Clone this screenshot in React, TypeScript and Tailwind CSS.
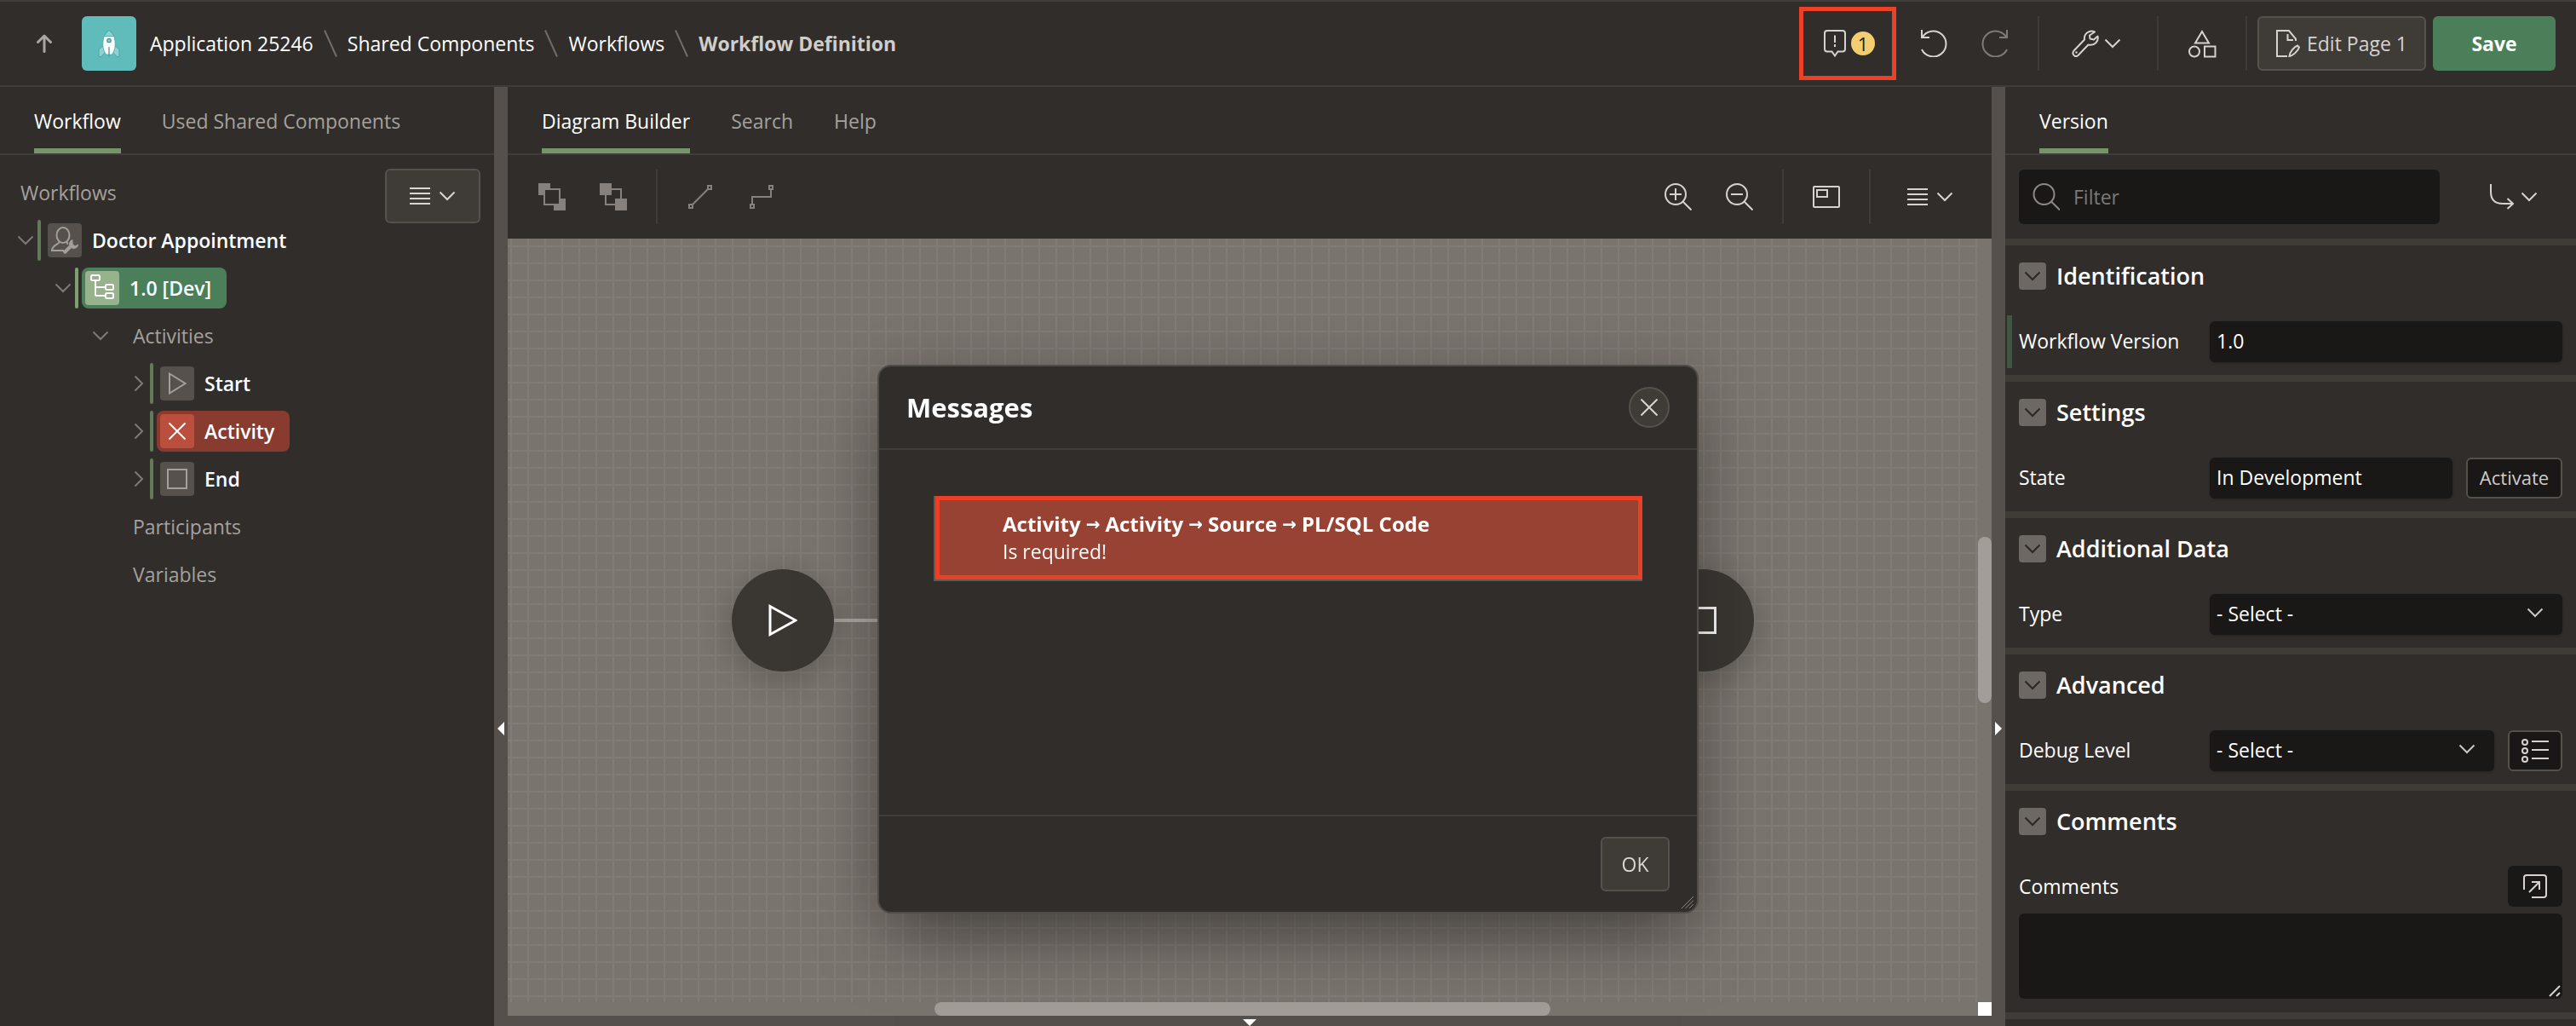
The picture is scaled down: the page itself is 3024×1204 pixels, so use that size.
import React, { useId } from 'react';

type IconProps = { w: number; h: number; className?: string; sw?: number; children: React.ReactNode };

function Icon({ w, h, className = '', sw = 2, children }: IconProps) {
  return (
    <svg
      width={w}
      height={h}
      viewBox={`0 0 ${w} ${h}`}
      fill="none"
      stroke="currentColor"
      strokeWidth={sw}
      className={`shrink-0 ${className}`}
      aria-hidden="true"
    >
      {children}
    </svg>
  );
}

const ChevronDown = ({ className = '' }: { className?: string }) => (
  <Icon w={20} h={12} className={className}>
    <path d="M1.5 1.5 L10 10 L18.5 1.5" />
  </Icon>
);

const ChevronRight = ({ className = '' }: { className?: string }) => (
  <Icon w={12} h={20} className={className}>
    <path d="M1.5 1.5 L10 10 L1.5 18.5" />
  </Icon>
);

const MenuLines = () => (
  <Icon w={24} h={20}>
    <path d="M0 1H24M0 7H24M0 13H24M0 19H24" />
  </Icon>
);

const Slash = () => (
  <Icon w={16} h={32} className="mx-3 text-[#716c67]">
    <path d="M1 0.5 L15 31.5" />
  </Icon>
);

const Rocket = () => (
  <svg width="26" height="34" viewBox="0 0 26 34" aria-hidden="true">
    <path d="M6.5 19 L1 24 V32.5 L3.5 32.5 L8.5 28 Z" fill="#8fd1cf" stroke="#4aa5a4" />
    <path d="M19.5 19 L25 24 V32.5 L22.5 32.5 L17.5 28 Z" fill="#8fd1cf" stroke="#4aa5a4" />
    <path d="M13 1.500 C10 4 8 6 7.500 8.500 H18.500 C18 6 16 4 13 1.500 Z" fill="#8fd1cf" stroke="#4aa5a4" />
    <path d="M7.300 8.500 C5 15 5 24 9.500 30 H16.500 C21 24 21 15 18.700 8.500 Z" fill="#ffffff" stroke="#4aa5a4" strokeWidth="0.8" />
    <circle cx="13" cy="13.5" r="2.2" fill="#8fd1cf" stroke="#3e9a99" strokeWidth="1.3" />
    <path d="M13 21V33" stroke="#4aa5a4" strokeWidth="1.4" />
  </svg>
);

const Triangle = ({ dir }: { dir: 'left' | 'right' | 'down' }) =>
  dir === 'down' ? (
    <svg width="16" height="8" viewBox="0 0 16 8" aria-hidden="true">
      <path d="M0 0H16L8 8Z" fill="#fff" />
    </svg>
  ) : (
    <svg width="8" height="16" viewBox="0 0 8 16" aria-hidden="true">
      <path d={dir === 'left' ? 'M8 0V16L0 8Z' : 'M0 0V16L8 8Z'} fill="#fff" />
    </svg>
  );

const VDivider = () => <div className="h-16 w-0.5 shrink-0 bg-[#3f3b38]" />;

function Header() {
  const link = 'text-white';
  return (
    <header className="flex h-[102px] shrink-0 items-center border-y-2 border-[#403c39] pr-6 pl-10">
      <button aria-label="Up" className="flex h-16 w-6 items-center justify-center text-[#aaa6a3]">
        <Icon w={20} h={22} sw={3}>
          <path d="M10 20.500V2.500M2.500 9.500L10 2L17.500 9.500" strokeLinecap="round" strokeLinejoin="round" />
        </Icon>
      </button>
      <a
        href="#app"
        aria-label="Application home"
        className="ml-8 flex h-16 w-16 items-center justify-center rounded-md bg-[#60bbbb]"
      >
        <Rocket />
      </a>
      <nav aria-label="Breadcrumb" className="ml-4 flex items-center whitespace-nowrap">
        <a href="#application" className={link}>Application 25246</a>
        <Slash />
        <a href="#shared" className={link}>Shared Components</a>
        <Slash />
        <a href="#workflows" className={link}>Workflows</a>
        <Slash />
        <span className="font-bold text-[#d0cdca]">Workflow Definition</span>
      </nav>
      <div className="ml-auto flex items-center text-[#d5d2cf]">
        <button
          aria-label="Messages, 1"
          className="flex h-[86px] w-[114px] items-center justify-center gap-1.5 border-5 border-[#ec4127] pl-1"
        >
          <Icon w={26} h={32}>
            <path d="M4 1H22Q25 1 25 4V22.500Q25 25.500 22 25.500H16.500L13 30.500L9.500 25.500H4Q1 25.500 1 22.500V4Q1 1 4 1Z" />
            <path d="M13 6.500V15M13 17V20" />
          </Icon>
          <span className="flex h-7 w-7 items-center justify-center rounded-full bg-[#f3cd70] text-[22px] leading-7 text-[#201d1a]">
            1
          </span>
        </button>
        <button aria-label="Undo" className="ml-7 flex h-16 w-8 items-center justify-center">
          <Icon w={32} h={32}>
            <path d="M2 0V9H11" />
            <path d="M2.500 9A15 15 0 1 1 2 23" />
          </Icon>
        </button>
        <button aria-label="Redo" className="ml-10 flex h-16 w-8 items-center justify-center text-[#7f7a76]">
          <Icon w={32} h={32}>
            <path d="M30 0V9H21" />
            <path d="M29.500 9A15 15 0 1 0 30 23" />
          </Icon>
        </button>
        <div className="ml-[34px]"><VDivider /></div>
        <button aria-label="Utilities" className="flex h-16 w-[138px] items-center justify-center gap-1.5 pr-1">
          <Icon w={32} h={32}>
            <path
              d="M27 2.500C21 -0.500 14 4.500 15 11.500L2.500 24.500C-0.500 28.500 4 33 7.500 30L19.500 17.500C27 19 32 13.500 30.500 7.500L26 11.500L21.500 10.500L21 6.500Z"
              strokeLinejoin="round"
            />
            <circle cx="5.5" cy="26.5" r="1.2" fill="currentColor" stroke="none" />
          </Icon>
          <ChevronDown />
        </button>
        <VDivider />
        <button aria-label="Shared components" className="flex h-16 w-[102px] items-center justify-center">
          <Icon w={34} h={34}>
            <path d="M17 3L25 16.500H9Z" />
            <circle cx="8" cy="26.5" r="6" />
            <path d="M20 20.500H32.500V32.500H20Z" />
          </Icon>
        </button>
        <VDivider />
        <button className="ml-3 flex h-16 w-[198px] items-center justify-center gap-2 rounded-md border-2 border-[#56524e] bg-[#3f3b37] whitespace-nowrap">
          <Icon w={28} h={32}>
            <path d="M13 31H1V1H15L23 10.500V13" />
            <path d="M13.500 5V12H20" />
            <path d="M25 18.500L27 20.500C26 24 20 30.500 15.500 31C16 26 21 20 25 18.500Z" />
          </Icon>
          Edit Page 1
        </button>
        <button className="ml-2 h-16 w-36 rounded-md bg-[#4b7f5a] font-bold text-white">Save</button>
      </div>
    </header>
  );
}

function Tabs({ items }: { items: string[] }) {
  return (
    <div role="tablist" className="flex h-20 shrink-0 gap-12 border-b-2 border-[#403c39] px-10 whitespace-nowrap">
      {items.map((t, i) => (
        <button
          key={t}
          role="tab"
          aria-selected={i === 0}
          className={
            i === 0
              ? 'border-b-6 border-[#759468] pt-2 text-white'
              : 'border-b-6 border-transparent pt-2 text-[#a5a19d]'
          }
        >
          {t}
        </button>
      ))}
    </div>
  );
}

const TreeIcon = ({ className = 'bg-[#56514d] text-[#a39f9b]', children }: { className?: string; children: React.ReactNode }) => (
  <span className={`flex h-10 w-10 shrink-0 items-center justify-center rounded ${className}`}>{children}</span>
);

function WorkflowTree() {
  const bar = 'h-12 w-1 shrink-0 rounded-sm bg-[#627a58]';
  const node = 'flex h-12 items-center gap-3 rounded-lg pl-1 pr-[18px] font-semibold text-white';
  return (
    <aside className="flex w-[580px] shrink-0 flex-col">
      <Tabs items={['Workflow', 'Used Shared Components']} />
      <div className="relative pt-4 whitespace-nowrap text-[#a5a19d]">
        <button
          aria-label="Tree menu"
          className="absolute top-4 right-4 flex h-16 w-28 items-center justify-center gap-2.5 rounded-md border-2 border-[#55514d] bg-[#3f3b37] text-[#d8d5d2]"
        >
          <MenuLines />
          <ChevronDown />
        </button>
        <div className="flex h-14 items-center pl-6">Workflows</div>
        <ul role="tree" aria-label="Workflows">
          <li role="treeitem" className="flex h-14 items-center pl-5">
            <ChevronDown className="text-[#7f7a76]" />
            <span className={`ml-1 ${bar}`} />
            <span className={`ml-1 ${node}`}>
              <TreeIcon>
                <Icon w={32} h={32}>
                  <ellipse cx="14" cy="10" rx="7.5" ry="9" />
                  <path d="M9.500 17.500C10 21 1 21 1 28H15M18.500 17.500C18.500 19 19 20 20 20.500" />
                  <path d="M15 31L23 23" strokeWidth="4" />
                  <path d="M25.500 15A5.500 5.500 0 1 0 32 20.500L28 22.500L25.500 20Z" fill="currentColor" stroke="none" />
                </Icon>
              </TreeIcon>
              Doctor Appointment
            </span>
          </li>
          <li role="treeitem" className="flex h-14 items-center pl-16">
            <ChevronDown className="text-[#7f7a76]" />
            <span className="ml-1 h-12 w-1 shrink-0 rounded-sm bg-[#7f9f71]" />
            <span className={`ml-1 bg-[#4b7f5a] ${node}`}>
              <TreeIcon className="bg-[#98b28d] text-white">
                <Icon w={28} h={32}>
                  <rect x="1" y="1" width="10" height="6" rx="1.5" />
                  <rect x="18" y="12" width="9" height="6" rx="1.5" />
                  <rect x="18" y="22" width="9" height="6" rx="1.5" />
                  <path d="M6 7V23.500Q6 25 7.500 25H18M6 15H18" />
                </Icon>
              </TreeIcon>
              1.0 [Dev]
            </span>
          </li>
          <li role="treeitem" className="flex h-14 items-center gap-7 pl-[108px]">
            <ChevronDown className="text-[#7f7a76]" />
            Activities
          </li>
          {[
            {
              label: 'Start',
              pill: '',
              box: 'bg-[#56514d] text-[#a39f9b]',
              d: 'M11 8.500L29.500 20L11 31.500Z',
            },
            {
              label: 'Activity',
              pill: 'bg-[#883b2e]',
              box: 'bg-[#b94f3c] text-white',
              d: 'M10.500 10.500L29.500 29.500M29.500 10.500L10.500 29.500',
            },
            {
              label: 'End',
              pill: '',
              box: 'bg-[#56514d] text-[#a39f9b]',
              d: 'M9 9H31V31H9Z',
            },
          ].map((n) => (
            <li key={n.label} role="treeitem" className="flex h-14 items-center pl-[157px]">
              <ChevronRight className="text-[#7f7a76]" />
              <span className={`ml-[7px] ${bar}`} />
              <span className={`ml-1 ${node} ${n.pill}`}>
                <TreeIcon className={n.box}>
                  <Icon w={40} h={40}>
                    <path d={n.d} />
                  </Icon>
                </TreeIcon>
                {n.label}
              </span>
            </li>
          ))}
          <li role="treeitem" className="flex h-14 items-center pl-[156px]">Participants</li>
          <li role="treeitem" className="flex h-14 items-center pl-[156px]">Variables</li>
        </ul>
      </div>
    </aside>
  );
}

function Splitter({ dir }: { dir: 'left' | 'right' }) {
  return (
    <div className="flex w-4 shrink-0 justify-center bg-[#55504b] pt-[745px]">
      <Triangle dir={dir} />
    </div>
  );
}

function Toolbar() {
  const btn = 'flex h-16 w-[72px] items-center justify-center';
  return (
    <div className="flex h-[98px] shrink-0 items-center px-4 text-[#d5d2cf]">
      <div className="flex items-center text-[#86817d]">
        <button aria-label="Bring to front" className={btn}>
          <Icon w={32} h={32}>
            <path d="M0 0H14V6H6V14H0Z" fill="currentColor" stroke="none" />
            <path d="M32 32H18V26H26V18H32Z" fill="currentColor" stroke="none" />
            <path d="M7 7H25V25H7Z" />
          </Icon>
        </button>
        <button aria-label="Send to back" className={btn}>
          <Icon w={32} h={32}>
            <path d="M0 0H14V14H0ZM18 18H32V32H18Z" fill="currentColor" stroke="none" />
            <path d="M14 7H25V18M7 14V25H18" />
          </Icon>
        </button>
        <div className="ml-3.5"><VDivider /></div>
        <button aria-label="Straight connector" className={`ml-3.5 ${btn}`}>
          <Icon w={28} h={28}>
            <path d="M1 23H5V27H1ZM23 1H27V5H23ZM4.500 23.500L23.500 4.500" />
          </Icon>
        </button>
        <button aria-label="Elbow connector" className={btn}>
          <Icon w={28} h={28}>
            <path d="M1 23H5V27H1ZM23 1H27V5H23ZM3 23V14H25V5" />
          </Icon>
        </button>
      </div>
      <div className="ml-auto flex items-center">
        <button aria-label="Zoom in" className={btn}>
          <Icon w={32} h={32}>
            <circle cx="13" cy="13" r="12" />
            <path d="M21.500 21.500L31.500 31.500M6 13H20M13 6V20" />
          </Icon>
        </button>
        <button aria-label="Zoom out" className={btn}>
          <Icon w={32} h={32}>
            <circle cx="13" cy="13" r="12" />
            <path d="M21.500 21.500L31.500 31.500M6 13H20" />
          </Icon>
        </button>
        <div className="ml-3.5"><VDivider /></div>
        <button aria-label="Overview" className="flex h-16 w-[100px] items-center justify-center">
          <Icon w={32} h={26}>
            <rect x="1" y="1" width="30" height="24" rx="1" />
            <path d="M5 5H17V13H5Z" />
          </Icon>
        </button>
        <VDivider />
        <button aria-label="Diagram menu" className="ml-3.5 flex h-16 w-28 items-center justify-center gap-2.5">
          <MenuLines />
          <ChevronDown />
        </button>
      </div>
    </div>
  );
}

function Diagram() {
  const circle =
    'absolute flex h-[120px] w-[120px] items-center justify-center rounded-full bg-[#3a3733] shadow-[0_8px_28px_6px_rgba(58,55,51,0.3)]';
  return (
    <div className="relative flex-1 overflow-hidden bg-[#7a746f]">
      <div className="absolute top-0 right-4 bottom-4 left-0 bg-[linear-gradient(to_right,#817c77_2px,transparent_2px),linear-gradient(to_bottom,#817c77_2px,transparent_2px)] bg-[size:20px_20px] bg-[position:3px_8px]" />
      <div className="absolute top-[446px] left-[383px] h-1 w-[960px] bg-[#afaaa6]" />
      <div className={`${circle} top-[388px] left-[263px] text-white`}>
        <Icon w={34} h={38} sw={3}>
          <path d="M2 2.500L32 19L2 35.500Z" />
        </Icon>
      </div>
      <div className={`${circle} top-[388px] left-[1343px] text-white`}>
        <Icon w={32} h={32} sw={3}>
          <path d="M1.500 1.500H30.500V30.500H1.500Z" />
        </Icon>
      </div>
      <div className="absolute top-[350px] right-0 h-[195px] w-4 rounded-full bg-[#a29d99]" />
      <div className="absolute bottom-0 left-[501px] h-4 w-[723px] rounded-full bg-[#a29d99]" />
      <div className="absolute right-0 bottom-0 h-4 w-4 bg-white" />
    </div>
  );
}

const field =
  'h-12 min-w-0 flex-1 rounded-md bg-[#191816] px-2 pb-0.5 text-white shadow-[0_1px_3px_rgba(25,24,22,0.5)] outline-none';

function SelectField({ id }: { id: string }) {
  return (
    <div className="relative flex min-w-0 flex-1">
      <select id={id} className={`${field} appearance-none`}>
        <option>- Select -</option>
      </select>
      <ChevronDown className="pointer-events-none absolute top-4 right-[22px] text-[#c9c6c3]" />
    </div>
  );
}

function Section({ title, children }: { title: string; children: React.ReactNode }) {
  return (
    <section className="border-t-8 border-[#3f3b37] pt-5 pb-4">
      <h2 className="flex items-center gap-3 pl-4 text-[27px] leading-8 font-semibold text-white">
        <button
          aria-label={`Collapse ${title}`}
          className="flex h-8 w-8 items-center justify-center rounded bg-[#6d6863] text-[#2a2724]"
        >
          <ChevronDown />
        </button>
        {title}
      </h2>
      {children}
    </section>
  );
}

function Row({ label, changed, children }: { label: string; changed?: boolean; children: (id: string) => React.ReactNode }) {
  const id = useId();
  return (
    <div
      className={`mt-[30px] -mb-2 ml-0.5 flex h-[62px] items-center border-l-6 pr-4 pl-2 text-white ${
        changed ? 'border-[#3f5741]' : 'border-transparent'
      }`}
    >
      <label htmlFor={id} className="w-56 shrink-0 pb-0.5">{label}</label>
      <div className="flex min-w-0 flex-1 gap-4">{children(id)}</div>
    </div>
  );
}

function PropertyPanel() {
  return (
    <aside className="flex w-[670px] shrink-0 flex-col overflow-hidden">
      <Tabs items={['Version']} />
      <div className="flex h-[98px] shrink-0 items-center pr-10 pl-4">
        <label className="flex h-16 min-w-0 flex-1 items-center gap-4 rounded-md bg-[#191816] px-4 text-[#8d8985]">
          <Icon w={32} h={32}>
            <circle cx="13.5" cy="13" r="12" />
            <path d="M22 21.500L32 31.500" />
          </Icon>
          <input
            aria-label="Filter"
            placeholder="Filter"
            className="min-w-0 flex-1 bg-transparent text-white outline-none placeholder:text-[#7d7975]"
          />
        </label>
        <button aria-label="Go to group" className="ml-[54px] flex h-16 w-[66px] items-center justify-center gap-2 text-[#d5d2cf]">
          <Icon w={28} h={30}>
            <path d="M1 0V9Q1 23 15 23H27M20.500 17L27 23L20.500 29" />
          </Icon>
          <ChevronDown />
        </button>
      </div>
      <Section title="Identification">
        <Row label="Workflow Version" changed>
          {(id) => <input id={id} defaultValue="1.0" className={field} />}
        </Row>
      </Section>
      <Section title="Settings">
        <Row label="State">
          {(id) => (
            <>
              <input id={id} readOnly value="In Development" className={field} />
              <button className="h-12 w-[113px] rounded-md border-2 border-[#56504b] bg-[#191816] pb-0.5 text-[22px] text-[#cfccc9]">
                Activate
              </button>
            </>
          )}
        </Row>
      </Section>
      <Section title="Additional Data">
        <Row label="Type">{(id) => <SelectField id={id} />}</Row>
      </Section>
      <Section title="Advanced">
        <Row label="Debug Level">
          {(id) => (
            <>
              <SelectField id={id} />
              <button
                aria-label="Debug level list"
                className="flex h-12 w-16 items-center justify-center rounded-md border-2 border-[#56504b] bg-[#191816] text-[#d5d2cf]"
              >
                <Icon w={32} h={28}>
                  <circle cx="4" cy="4" r="3" />
                  <circle cx="4" cy="14" r="3" />
                  <circle cx="4" cy="24" r="3" />
                  <path d="M12 3H32M12 13H32M12 23H32" />
                </Icon>
              </button>
            </>
          )}
        </Row>
      </Section>
      <Section title="Comments">
        <div className="mt-9 px-4 text-white">
          <div className="flex h-12 items-center justify-between">
            <label htmlFor="comments">Comments</label>
            <button
              aria-label="Open comments editor"
              className="flex h-12 w-16 items-center justify-center rounded-md bg-[#191816] text-[#d5d2cf]"
            >
              <Icon w={28} h={28}>
                <path d="M1 18V4Q1 1 4 1H24Q27 1 27 4V24Q27 27 24 27H10M7 21L19 9M10 9H19V18" />
              </Icon>
            </button>
          </div>
          <div className="relative mt-2">
            <textarea
              id="comments"
              className="block h-[100px] w-full resize-none rounded-md bg-[#191816] px-2 outline-none"
            />
            <Icon w={14} h={14} className="pointer-events-none absolute right-0.5 bottom-0.5 text-[#d5d2cf]">
              <path d="M1 13L13 1M9 13L13 9" />
            </Icon>
          </div>
        </div>
      </Section>
      <div className="h-2 shrink-0 bg-[#3f3b37]" />
    </aside>
  );
}

function MessagesDialog() {
  const path = ['Activity', 'Activity', 'Source', 'PL/SQL Code'];
  return (
    <div
      role="dialog"
      aria-label="Messages"
      className="fixed inset-x-0 top-[428px] mx-auto flex h-[644px] w-[964px] flex-col rounded-2xl border-2 border-[#504c48] bg-[#312d2a] shadow-[0_40px_80px_-20px_rgba(20,18,16,0.5),0_0_60px_rgba(60,56,52,0.2)]"
    >
      <div className="flex h-[98px] shrink-0 items-center justify-between border-b-2 border-[#403c39] px-8">
        <h1 className="text-[31px] leading-10 font-bold text-white">Messages</h1>
        <button
          aria-label="Close"
          className="flex h-12 w-12 items-center justify-center rounded-full border-2 border-[#55514d] bg-[#3f3b37] text-[#d8d5d2]"
        >
          <Icon w={20} h={20}>
            <path d="M0.500 0.500L19.500 19.500M19.500 0.500L0.500 19.500" />
          </Icon>
        </button>
      </div>
      <div className="flex-1 px-16 pt-[54px]">
        <div className="border-b-2 border-l-2 border-[#56605a]">
          <a
            href="#activity"
            className="block border-5 border-[#ec3f25] bg-[#984234] py-3 pl-[74px] leading-8 text-white"
          >
            <span className="flex items-center gap-1.5 text-[24px] font-bold">
              {path.map((p, i) => (
                <React.Fragment key={i}>
                  {i > 0 && <span className="font-['DejaVu_Sans',sans-serif] text-[20px]">→</span>}
                  <span>{p}</span>
                </React.Fragment>
              ))}
            </span>
            <span className="block">Is required!</span>
          </a>
        </div>
      </div>
      <div className="relative flex h-[114px] shrink-0 items-start justify-end border-t-2 border-[#403c39] pt-6 pr-8">
        <button className="h-16 w-[81px] rounded-md border-2 border-[#55514d] bg-[#3f3b37] text-[#d8d5d2]">OK</button>
        <Icon w={14} h={14} sw={1} className="absolute right-1 bottom-1 text-[#8b8682]">
          <path d="M0 14L14 0M4.500 14L14 4.500M9 14L14 9" />
        </Icon>
      </div>
    </div>
  );
}

export default function App() {
  return (
    <div className="flex h-screen flex-col overflow-hidden bg-[#312d2a] font-['Open_Sans',sans-serif] text-[23px] leading-8 text-white">
      <Header />
      <main className="flex min-h-0 flex-1">
        <WorkflowTree />
        <Splitter dir="left" />
        <section aria-label="Diagram" className="flex min-w-0 flex-1 flex-col">
          <Tabs items={['Diagram Builder', 'Search', 'Help']} />
          <Toolbar />
          <Diagram />
          <div className="flex h-3 shrink-0 items-end justify-center bg-[#55504b]">
            <Triangle dir="down" />
          </div>
        </section>
        <Splitter dir="right" />
        <PropertyPanel />
      </main>
      <MessagesDialog />
    </div>
  );
}
